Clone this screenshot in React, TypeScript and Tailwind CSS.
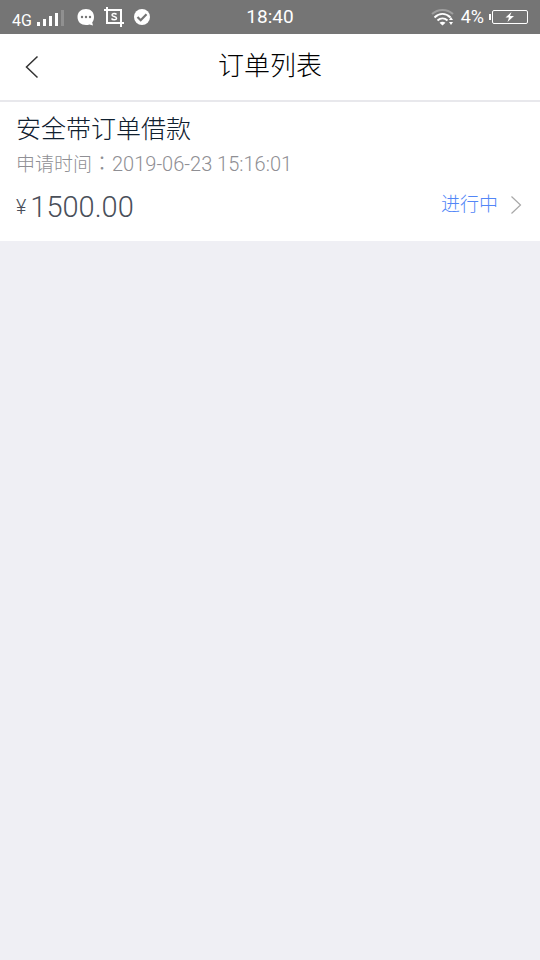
import { useState } from "react";

const orders = [
  {
    id: 1,
    title: "安全带订单借款",
    time: "2019-06-23 15:16:01",
    amount: "1500.00",
    status: "进行中",
  },
];

function StatusBar() {
  return (
    <div className="h-[34px] bg-[#757575] text-white font-normal grid grid-cols-[1fr_auto_1fr] items-center px-3">
      <div className="flex items-center">
        <span className="text-base leading-5 pt-2">4G</span>
        {/* Signal strength */}
        <svg width="28" height="18" viewBox="0 0 28 18" fill="white" className="ml-1">
          <rect x="1" y="14" width="3" height="4" />
          <rect x="7" y="11" width="3" height="7" />
          <rect x="13" y="8" width="3" height="10" />
          <rect x="19" y="5" width="3" height="13" />
          <rect x="25" y="2" width="3" height="16" opacity="0.2" />
        </svg>
        {/* Message */}
        <svg width="18" height="18" viewBox="0 0 18 18" className="ml-3">
          <path d="M10 1C5 1 1.500 4 1.500 9s3.500 8 8.500 8c1.300 0 2.500-.2 3.500-.6L17 17.500l-.8-3C17.500 13 18 11.200 18 9c0-5-3.200-8-8-8z" fill="white" />
          <circle cx="6" cy="9" r="1.200" fill="#757575" />
          <circle cx="10" cy="9" r="1.200" fill="#757575" />
          <circle cx="14" cy="9" r="1.200" fill="#757575" />
        </svg>
        {/* Screenshot */}
        <svg width="20" height="20" viewBox="0 0 20 20" fill="none" stroke="white" strokeWidth="2" className="ml-2.5">
          <path d="M0 3h17v17M3 0v16h17" />
          <path d="M12.500 7.500C11.500 6 8 6 8 8s4.500 1 4.500 3.200S8.500 13 7.500 11.500" strokeWidth="1.500" />
        </svg>
        {/* Done */}
        <svg width="16" height="16" viewBox="0 0 16 16" fill="none" className="ml-2.5">
          <circle cx="8" cy="8" r="8" fill="white" />
          <path d="M3.500 8l3.200 3.200 5.800-6" stroke="#757575" strokeWidth="2.200" />
        </svg>
      </div>
      <span className="text-[19px] leading-6">18:40</span>
      <div className="flex items-center justify-end">
        {/* Wi-Fi */}
        <svg width="24" height="18" viewBox="0 0 24 18" fill="none" stroke="white" strokeWidth="2">
          <path d="M1 6c6-5.500 15-5.500 21 0" opacity="0.3" />
          <path d="M3.500 9.500c5-4.600 11-4.600 16 0" />
          <path d="M6.500 12.500c3-2.800 7-2.800 10 0" />
          <path d="M8.500 14.800c1.800-1.500 4.200-1.500 6 0L11.500 17.500z" fill="white" stroke="none" />
          <path d="M20 9l2 3h-4zM20 17l-2-3h4z" fill="white" stroke="none" />
        </svg>
        <span className="text-lg leading-6 ml-1.5">4%</span>
        {/* Battery */}
        <svg width="40" height="16" viewBox="0 0 40 16" fill="none" className="ml-1">
          <path d="M2 5v6" stroke="white" strokeWidth="2" />
          <rect x="4.500" y="1.500" width="35" height="13" rx="1.500" stroke="white" />
          <path d="M23.500 3l-6 5.500h3.500L19.500 13l6.500-6h-4z" fill="white" />
        </svg>
      </div>
    </div>
  );
}

export default function OrderList() {
  const [selected, setSelected] = useState<number | null>(null);

  return (
    <div className="min-h-screen bg-[#efeff4] font-light font-['Roboto','Noto_Sans_CJK_SC',sans-serif]">
      <StatusBar />

      {/* Header */}
      <header className="h-[68px] bg-white border-b-2 border-[#e8e8ec] grid grid-cols-[64px_1fr_64px] items-center">
        <button type="button" aria-label="返回" className="h-full flex items-center pl-6">
          <svg width="16" height="24" viewBox="0 0 16 24" fill="none" stroke="#333" strokeWidth="1.500">
            <path d="M13.500 1.500L2.500 12l11 10.500" />
          </svg>
        </button>
        <h1 className="text-[26px] leading-9 pb-0.5 text-black text-center">订单列表</h1>
      </header>

      {/* Orders */}
      <ul>
        {orders.map((order) => (
          <li key={order.id}>
            <button
              type="button"
              aria-pressed={selected === order.id}
              onClick={() => setSelected(order.id)}
              className="block w-full bg-white text-left pl-4 pr-[18px] pt-2.5 pb-3"
            >
              <h2 className="text-[25px] leading-9 text-[#10202f]">{order.title}</h2>
              <p className="flex items-baseline text-xl leading-8 text-[#8f8f94]">
                <span className="text-[19px]">申请时间</span>
                <span lang="zh-TW" className="text-xl font-['Noto_Sans_CJK_TC',sans-serif]">：</span>
                <span>{order.time}</span>
              </p>
              <div className="flex items-center justify-between pt-1">
                <p className="flex items-center gap-1 text-[#4a4f5a] leading-[44px]">
                  <span className="text-xl">¥</span>
                  <span className="text-[29px]">{order.amount}</span>
                </p>
                <div className="flex items-center gap-3 pb-1">
                  <span className="text-[19px] leading-8 text-[#5286f7]">{order.status}</span>
                  <svg width="12" height="20" viewBox="0 0 12 20" fill="none" stroke="#a8a8a8" strokeWidth="1.200">
                    <path d="M1.500 1.500L10.500 10l-9 8.500" />
                  </svg>
                </div>
              </div>
            </button>
          </li>
        ))}
      </ul>
    </div>
  );
}
